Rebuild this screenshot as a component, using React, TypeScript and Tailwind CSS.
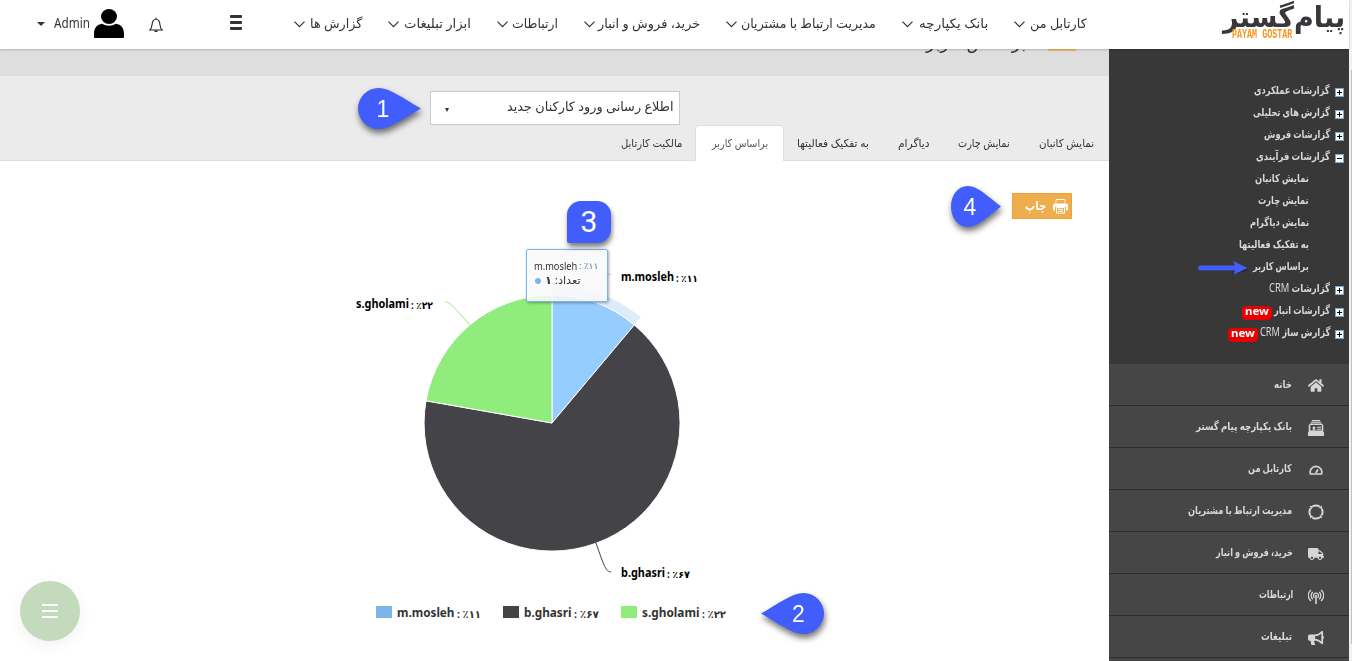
import { useLayoutEffect, useRef, type ReactNode } from 'react';
import { FaHome, FaTruck, FaBullhorn } from 'react-icons/fa';
import clsx from 'clsx';

/* Text squeezed or stretched horizontally so that it fills its box. */
function Fit({ className, children, ltr = false }: { className: string; children: ReactNode; ltr?: boolean }) {
  const ref = useRef<HTMLSpanElement>(null);
  useLayoutEffect(() => {
    const span = ref.current;
    if (!span || !span.parentElement) return;
    const scale = span.parentElement.clientWidth / span.offsetWidth;
    span.style.transform = `scaleX(${scale})`;
  }, []);
  return (
    <div dir="ltr" className={clsx('shrink-0', className)}>
      <span ref={ref} dir={ltr ? 'ltr' : 'rtl'} className="inline-block origin-left whitespace-nowrap">
        {children}
      </span>
    </div>
  );
}

const NAV = [
  { text: 'گزارش ها', box: 'w-[68px]', label: 'w-[52px]' },
  { text: 'ابزار تبلیغات', box: 'w-[83px]', label: 'w-[67px]' },
  { text: 'ارتباطات', box: 'w-[61px]', label: 'w-[46px]' },
  { text: 'خرید، فروش و انبار', box: 'w-[116px]', label: 'w-[102px]' },
  { text: 'مدیریت ارتباط با مشتریان', box: 'w-[150px]', label: 'w-[135px]' },
  { text: 'بانک یکپارچه', box: 'w-[86px]', label: 'w-[69px]' },
  { text: 'کارتابل من', box: 'w-[73px]', label: 'w-[57px]' },
];

function Header() {
  return (
    <header className="relative z-10 flex h-[49px] w-[1349px] items-center bg-white shadow-[0_1px_2px_rgba(0,0,0,0.2)]">
      <div className="flex h-full w-[294px] shrink-0 items-center text-[#333]">
        <div className="mt-[-1px] ml-[37px] border-x-4 border-t-4 border-x-transparent border-t-[#333]" />
        <Fit ltr className="-mt-1 ml-[9px] w-[36px] text-[14px]">Admin</Fit>
        <svg className="-mt-0.5 ml-1 h-[30px] w-[30px] shrink-0" viewBox="0 0 30 30">
          <ellipse cx="15" cy="7.5" rx="8" ry="7.5" fill="#000" />
          <path d="M0 28V25c0-6 3-9.500 8-10.200 4.500 2.500 9.500 2.500 14 0C27 15.500 30 19 30 25v3c0 .7-.6 1-1 1H1c-.4 0-1-.3-1-1Z" fill="#000" />
        </svg>
        <svg className="ml-[25px] h-4 w-[14px] shrink-0" viewBox="0 0 14 16" fill="none" stroke="#222" strokeWidth="1.1">
          <path d="M.8 13h12.400c-1.500-1.500-2-2.500-2.200-5C10.700 4 9.500 2.200 7 2.200S3.300 4 3 8c-.2 2.500-.7 3.500-2.200 5ZM7 .5v1.700" />
          <path d="M5 13.500h4c-.5 2-3.500 2-4 0Z" fill="#222" stroke="none" />
        </svg>
        <div className="mt-[-4px] ml-[67px] flex w-3 flex-col gap-[3px]">
          <div className="h-[3px] rounded-[1px] bg-[#333]" />
          <div className="h-[3px] rounded-[1px] bg-[#333]" />
          <div className="h-[3px] rounded-[1px] bg-[#333]" />
        </div>
      </div>
      <nav className="-mt-0.5 flex items-center gap-[26px] text-[13px] text-[#333]">
        {NAV.map((n) => (
          <div key={n.text} className={clsx('flex items-center justify-between', n.box)}>
            <svg className="mt-0.5 h-[7px] w-[11px] shrink-0" viewBox="0 0 11 7" fill="none" stroke="#333" strokeWidth="1.2">
              <path d="M.5.7 5.500 5.700 10.500.7" />
            </svg>
            <Fit className={clsx('mt-px', n.label)}>{n.text}</Fit>
          </div>
        ))}
      </nav>
      <div className="relative ml-[136px] h-[49px] w-[122px] shrink-0">
        <Fit className="w-[122px] font-['DejaVu_Sans',sans-serif] text-[29px] leading-[34px] font-bold text-[#38383c]">پیام‌گستر</Fit>
        <Fit ltr className="absolute top-[29px] left-[9px] w-[60px] font-['Liberation_Mono',monospace] text-[12px] leading-[12px] font-bold text-[#f7941e]">PAYAM GOSTAR</Fit>
      </div>
    </header>
  );
}

const TREE = [
  { text: 'گزارشات عملکردی', w: 'w-[76px]', sign: '+' },
  { text: 'گزارش های تحلیلی', w: 'w-[77px]', sign: '+' },
  { text: 'گزارشات فروش', w: 'w-[66px]', sign: '+' },
  { text: 'گزارشات فرآیندی', w: 'w-[74px]', sign: '-' },
  { text: 'نمایش کانبان', w: 'w-[54px]' },
  { text: 'نمایش چارت', w: 'w-[51px]' },
  { text: 'نمایش دیاگرام', w: 'w-[59px]' },
  { text: 'به تفکیک فعالیتها', w: 'w-[70px]' },
  { text: 'براساس کاربر', w: 'w-[56px]', arrow: true },
  { text: 'گزارشات CRM', w: 'w-[61px]', sign: '+' },
  { text: 'گزارشات انبار', w: 'w-[56px]', sign: '+', badge: true },
  { text: 'گزارش ساز CRM', w: 'w-[70px]', sign: '+', badge: true },
];

function Toggle({ sign }: { sign: string }) {
  return (
    <svg className="mt-[3px] ml-[5px] h-[9px] w-[9px] shrink-0" viewBox="0 0 9 9" shapeRendering="crispEdges">
      <rect width="9" height="9" fill="#7ba7cf" />
      <rect x="1" y="1" width="7" height="7" fill="#fff" />
      <rect x="2" y="4" width="5" height="1" fill="#000" />
      {sign === '+' && <rect x="4" y="2" width="1" height="5" fill="#000" />}
    </svg>
  );
}

function BlueArrow() {
  return (
    <svg className="mt-[2px] mr-[3px] h-[18px] w-[53px] shrink-0" viewBox="0 0 53 18">
      <path d="M3 10.500h35L37 14l13-4" fill="none" stroke="#000" strokeOpacity=".3" strokeWidth="3" />
      <path d="M3.500 6.500H38L36 2l14.500 7L36 16l2-4.500H3.500a2.500 2.500 0 0 1 0-5Z" fill="#415dfb" />
    </svg>
  );
}

const LIGHT = '#d4d6da';

function BankIcon() {
  return (
    <svg className="h-4 w-4" viewBox="0 0 16 16" fill={LIGHT}>
      <rect x="4" y="0" width="8" height="1" />
      <rect x="3" y="1.600" width="10" height="1.200" />
      <path d="M2 3.500h12l1.300 2V12H.7V5.500ZM2.300 5v5.500h11.400V5Z" fillRule="evenodd" />
      <circle cx="6" cy="7.800" r="1.400" />
      <path d="M4.500 10.500h3V9.300h-3ZM9 6.800h4v1H9ZM9 8.800h4v1H9Z" />
      <rect x="0" y="12" width="16" height="4" rx=".5" />
    </svg>
  );
}

function GaugeIcon() {
  return (
    <svg className="mt-px h-[10px] w-[14px]" viewBox="0 0 14 10" fill="none" stroke={LIGHT} strokeWidth="1.700">
      <path d="M1.500 9A5.800 5.800 0 1 1 12.500 9Z" />
      <path d="M6.800 8 9 4.500" />
    </svg>
  );
}

function CycleIcon() {
  return (
    <svg className="h-4 w-4" viewBox="0 0 16 16" fill="none" stroke={LIGHT} strokeWidth="2">
      <circle cx="8" cy="8" r="6.600" strokeDasharray="7.400 2.967" strokeDashoffset="3.700" />
      <path d="M10.500 3.800 14 5V1.500ZM12.200 10.500 11 14h3.500ZM5.500 12.200 2 11v3.500ZM3.800 5.500 5 2H1.500Z" fill={LIGHT} stroke="none" />
    </svg>
  );
}

function AntennaIcon() {
  return (
    <svg className="h-4 w-4" viewBox="0 0 16 16" fill="none" stroke={LIGHT} strokeWidth="1.300">
      <path d="M3 13A7 7 0 0 1 3 2M13 13a7 7 0 0 0 0-11M4.800 11.200a4.800 4.800 0 0 1 0-7.200M11.200 11.200a4.800 4.800 0 0 0 0-7.200M6.500 9.700a2.500 2.500 0 1 1 3 0" />
      <path d="M8 7v9" strokeWidth="1.600" />
    </svg>
  );
}

function TruckIcon() {
  return <FaTruck className="h-3 w-4" preserveAspectRatio="none" color={LIGHT} />;
}

function PrinterIcon() {
  return (
    <svg className="h-[15px] w-[15px] shrink-0" viewBox="0 0 15 15">
      <path d="M3 3.500V1.200Q3 .5 3.700.5h7.600q.7 0 .7.7v2.300" fill="none" stroke="#fff" />
      <path d="M1.500 4.500h12A1.500 1.500 0 0 1 15 6v4.500q0 1-1 1h-1V8H2v3.500H1q-1 0-1-1V6a1.500 1.500 0 0 1 1.500-1.500Z" fill="#fff" />
      <path d="M3.500 8.500h8v5.700h-8Z" fill="none" stroke="#fff" />
      <path d="M5 10.300h5M5 12.300h5" stroke="#fff" />
    </svg>
  );
}

const MENU = [
  { text: 'خانه', w: 'w-[18px]', pad: 'mr-4', icon: <FaHome size={17} color={LIGHT} /> },
  { text: 'بانک یکپارچه پیام گستر', w: 'w-[96px]', pad: 'mr-4', icon: <BankIcon /> },
  { text: 'کارتابل من', w: 'w-[44px]', pad: 'mr-4', icon: <GaugeIcon /> },
  { text: 'مدیریت ارتباط با مشتریان', w: 'w-[104px]', pad: 'mr-4', icon: <CycleIcon /> },
  { text: 'خرید، فروش و انبار', w: 'w-[77px]', pad: 'mr-[15px]', icon: <TruckIcon /> },
  { text: 'ارتباطات', w: 'w-[34px]', pad: 'mr-[15px]', icon: <AntennaIcon /> },
  { text: 'تبلیغات', w: 'w-[31px]', pad: 'mr-4', icon: <FaBullhorn size={16} color={LIGHT} /> },
];

function Sidebar() {
  return (
    <aside className="h-[612px] w-[240px] shrink-0 overflow-hidden bg-[#383838] text-[11px] font-semibold text-[#d8d8d8]">
      <div className="h-[315px] pt-[31px]">
        {TREE.map((t) => (
          <div key={t.text} className={clsx('flex h-[22px] items-center justify-end', t.sign ? 'pr-[5px]' : 'pr-10')}>
            {t.arrow && <BlueArrow />}
            {t.badge && (
              <div className="mt-[3px] mr-[2px] flex h-[14px] w-[30px] items-center justify-center rounded bg-[#e60000] text-[11px] font-bold text-white">
                <Fit ltr className="mt-[-2px] w-6">new</Fit>
              </div>
            )}
            <Fit className={clsx('-mt-px', t.w)}>
              {t.text.replace('CRM', '')}
              {t.text.includes('CRM') && <span className="text-[12px] leading-[11px] font-normal">CRM</span>}
            </Fit>
            {t.sign && <Toggle sign={t.sign} />}
          </div>
        ))}
      </div>
      {MENU.map((m) => (
        <div key={m.text} className="flex h-[42px] items-center justify-end border-b border-[#2e2e2e] bg-[#464646] pr-[25px]">
          <Fit className={clsx(m.pad, m.w)}>{m.text}</Fit>
          <div className="mt-0.5 flex w-4 shrink-0 justify-center">{m.icon}</div>
        </div>
      ))}
      <div className="h-4 bg-[#464646]" />
    </aside>
  );
}

const LONG_PIN = 'M63 20.500C46 11 32 0 20.500 0a20.500 20.500 0 0 0 0 41C32 41 46 30 63 20.500Z';
const SHORT_PIN = 'M50 20.500C36 10 27 0 17 0C7 0 0 9 0 20.500S7 41 17 41C27 41 36 31 50 20.500Z';

function Pin({ n, className, flip = false, length }: { n: string; className: string; flip?: boolean; length: number }) {
  return (
    <svg className={clsx('absolute overflow-visible drop-shadow-[1px_4px_3px_rgba(0,0,0,0.55)]', className)} viewBox={`0 0 ${length} 41`}>
      <path d={length > 55 ? LONG_PIN : SHORT_PIN} fill="#415dfb" transform={flip ? `translate(${length} 0) scale(-1 1)` : undefined} />
      <text x={flip ? 37.5 : length > 55 ? 25 : 19} y="28.500" textAnchor="middle" fill="#fff" fontSize="23" fontFamily="Liberation Sans, sans-serif">
        {n}
      </text>
    </svg>
  );
}

const TABS = [
  { text: 'نمایش کانبان', w: 'w-[55px]' },
  { text: 'نمایش چارت', w: 'w-[52px]' },
  { text: 'دیاگرام', w: 'w-[31px]' },
  { text: 'به تفکیک فعالیتها', w: 'w-[72px]' },
];

function Toolbar() {
  return (
    <div className="relative h-[85px] border-b border-[#dcdcdc] bg-[#ebebeb] pt-[15px] text-[#333]">
      <div className="ml-[430px] flex h-[34px] w-[250px] items-center justify-between border border-[#ccc] bg-white pr-[5px] pl-[14px]">
        <div className="mt-1 border-x-[2.5px] border-t-4 border-x-transparent border-t-[#333]" />
        <Fit className="-mt-0.5 w-[167px] text-[13px]">اطلاع رسانی ورود کارکنان جدید</Fit>
      </div>
      <div dir="rtl" className="flex h-[36px] items-center pr-[15px] text-[11px] font-medium">
        <div className="flex gap-[29px]">
          {TABS.map((t) => (
            <Fit key={t.text} className={t.w}>{t.text}</Fit>
          ))}
        </div>
        <div className="relative mt-px mr-[13px] flex h-[37px] w-[89px] items-center justify-center rounded-t border border-b-0 border-[#ddd] bg-white pb-0.5 text-[#555]">
          <Fit className="w-[56px]">براساس کاربر</Fit>
        </div>
        <Fit className="mr-[13px] w-[61px]">مالکیت کارتابل</Fit>
      </div>
      <Pin n="1" length={63} className="top-[12px] left-[358px] h-[41px] w-[63px]" />
    </div>
  );
}

const LABELS = [
  { name: 'm.mosleh', x: 621, nw: 53, pct: ': ٪۱۱', px: 676, pw: 22, y: 281 },
  { name: 'b.ghasri', x: 621, nw: 44, pct: ': ٪۶۷', px: 667, pw: 23, y: 577 },
  { name: 's.gholami', x: 356, nw: 53, pct: ': ٪۲۲', px: 411, pw: 22, y: 308 },
];

const LEGEND = [
  { name: 'm.mosleh', x: 376, nw: 57.5, pct: ': ٪۱۱', px: 457, pw: 24, color: '#7cb5ec' },
  { name: 'b.ghasri', x: 503, nw: 47.5, pct: ': ٪۶۷', px: 574, pw: 25, color: '#434348' },
  { name: 's.gholami', x: 621, nw: 57.5, pct: ': ٪۲۲', px: 702, pw: 24, color: '#90ed7d' },
];

function PieChart() {
  return (
    <svg className="block h-[500px] w-[1109px]" viewBox="0 161 1109 500" fontFamily="'Noto Sans', 'DejaVu Sans', sans-serif" fontWeight="bold">
      <path d="M552 285A138 138 0 0 1 640.700 317.300L634.300 325A128 128 0 0 0 552 295Z" fill="#7cb5ec" fillOpacity=".25" />
      <g stroke="#fff" strokeWidth="1" strokeLinejoin="round">
        <path d="M552 423V295A128 128 0 0 1 634.300 325Z" fill="#96cdff" />
        <path d="M552 423 634.300 325A128 128 0 1 1 426 400.800Z" fill="#434348" />
        <path d="M552 423 426 400.800A128 128 0 0 1 552 295Z" fill="#90ed7d" />
      </g>
      <g fill="none">
        <path d="M611 274C606 274 604 280 596 303" stroke="#7cb5ec" strokeOpacity=".6" />
        <path d="M611 572C606 572 604 566 596 543" stroke="#434348" />
        <path d="M445 302C450 302 453 306 470 325" stroke="#90ed7d" />
      </g>
      {LABELS.map((l) => (
        <g key={l.name} fontSize="11.500" fill="#000">
          <text x={l.x} y={l.y} textLength={l.nw} lengthAdjust="spacingAndGlyphs">{l.name}</text>
          <text x={l.px} y={l.y + 0.5} fontSize="10" textLength={l.pw} lengthAdjust="spacingAndGlyphs">{l.pct}</text>
        </g>
      ))}
      {LEGEND.map((l) => (
        <g key={l.name} fontSize="12.500" fill="#333">
          <rect x={l.x} y="606" width="16" height="12" fill={l.color} />
          <text x={l.x + 21} y="617" textLength={l.nw} lengthAdjust="spacingAndGlyphs">{l.name}</text>
          <text x={l.px} y="617.500" fontSize="10.500" textLength={l.pw} lengthAdjust="spacingAndGlyphs">{l.pct}</text>
        </g>
      ))}
    </svg>
  );
}

function Tooltip() {
  return (
    <div className="absolute top-[88px] left-[526px] h-[53px] w-[82px] rounded-[2px] border border-[#7cb5ec] bg-[#f9f9f9]/85 pt-[9px] pl-[7px] text-[#333] shadow-[1px_1px_3px_rgba(0,0,0,0.35)]">
      <div className="flex h-[14px] items-center text-[11px]">
        <Fit ltr className="w-[43px]">m.mosleh</Fit>
        <Fit ltr className="ml-0.5 w-[19px] text-[9px] text-[#567a9c]">: ٪۱۱</Fit>
      </div>
      <div className="flex h-4 items-center">
        <div className="-mt-px ml-px mr-[4px] h-[6px] w-[6px] rounded-full bg-[#7cb5ec]" />
        <Fit className="-mt-px w-[36px] text-[11px]">تعداد: <b>۱</b></Fit>
      </div>
    </div>
  );
}

export default function App() {
  return (
    <div className="h-[661px] w-[1352px] overflow-hidden bg-white font-['Noto_Sans','DejaVu_Sans',sans-serif]">
      <div className="flex">
        <div className="w-[1349px]">
          <Header />
          <div className="flex">
            <main className="relative h-[612px] w-[1109px] shrink-0">
              <div dir="rtl" className="flex h-[27px] items-start overflow-hidden bg-[#dedede] pr-[33px]">
                <div className="h-[2px] w-7 shrink-0 bg-[#f0b968]" />
                <Fit className="mt-[-18px] mr-[22px] w-[100px] text-[17px] leading-[24px] text-[#333]">براساس کاربر</Fit>
              </div>
              <Toolbar />
              <section className="relative h-[500px] bg-white">
                <PieChart />
                <Tooltip />
                <div className="absolute top-[40px] left-[567px] flex h-[42px] w-11 items-center justify-center rounded-[14px] rounded-bl-[2px] bg-[#415dfb] pb-px font-['Roboto',sans-serif] text-[30px] text-white shadow-[1px_4px_5px_rgba(0,0,0,0.5)]">
                  3
                </div>
                <button className="absolute top-[32px] left-[1012px] flex h-[26px] w-[60px] items-center justify-end border border-[#eea236] bg-[#f0ad4e] pr-[3px] text-[12px] font-bold text-white">
                  <Fit className="mr-[7px] w-[21px]">چاپ</Fit>
                  <PrinterIcon />
                </button>
                <Pin n="4" length={50} className="top-[25px] left-[951px] h-[41px] w-[50px]" />
                <Pin n="2" flip length={63} className="top-[432px] left-[761px] h-[41px] w-[63px]" />
                <button className="absolute top-[420px] left-[20px] flex h-[60px] w-[60px] flex-col items-center justify-center gap-1 rounded-full bg-[#c3dbbc] shadow-[0_4px_16px_rgba(0,0,0,0.06)]">
                  <span className="h-[2px] w-4 bg-white" />
                  <span className="h-[2px] w-4 bg-white" />
                  <span className="h-[2px] w-4 bg-white" />
                </button>
              </section>
            </main>
            <Sidebar />
          </div>
        </div>
        <div className="h-[661px] w-[3px] bg-[#f1f1f1] pt-[70px] pl-[2px]">
          <div className="h-[574px] bg-[#c1c1c1]" />
        </div>
      </div>
    </div>
  );
}
